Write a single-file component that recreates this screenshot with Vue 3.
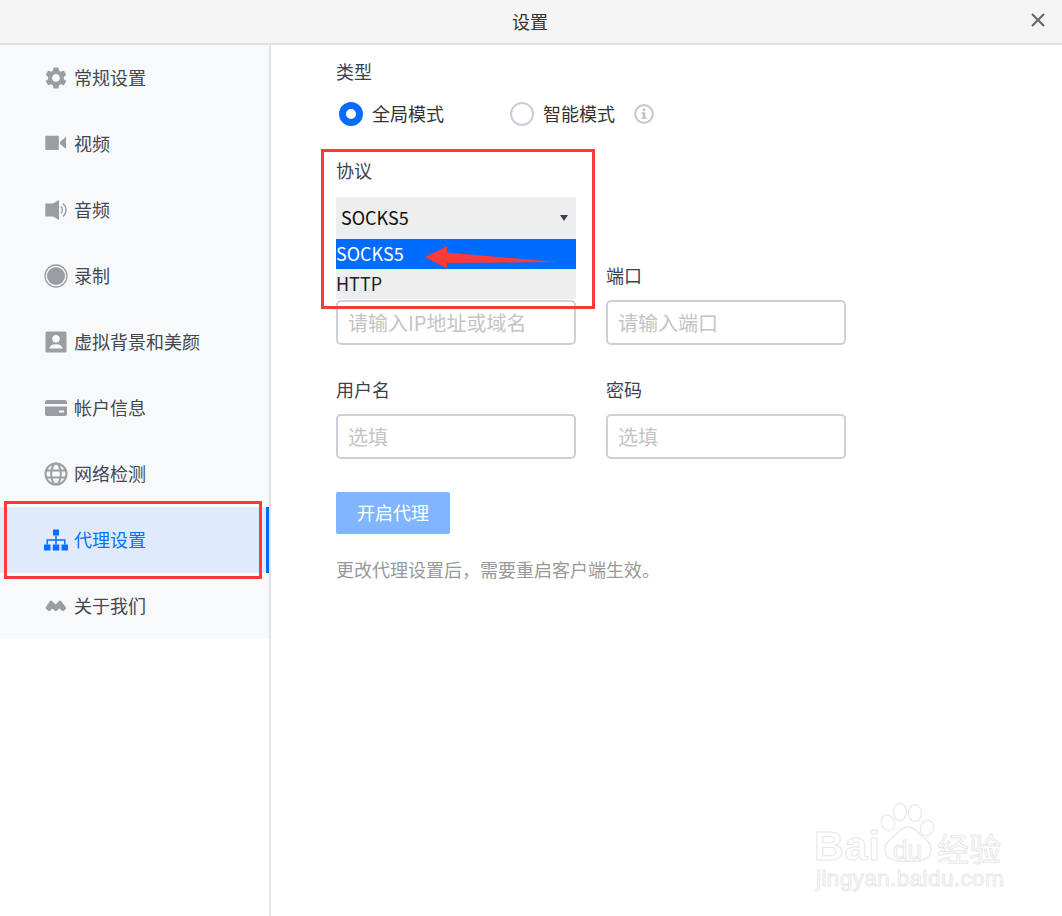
<script setup>
const menu = [
  { key: 'gear', label: '常规设置' },
  { key: 'video', label: '视频' },
  { key: 'audio', label: '音频' },
  { key: 'record', label: '录制' },
  { key: 'person', label: '虚拟背景和美颜' },
  { key: 'card', label: '帐户信息' },
  { key: 'globe', label: '网络检测' },
  { key: 'net', label: '代理设置', active: true },
  { key: 'about', label: '关于我们' }
]
</script>

<template>
  <div class="app">
    <header class="titlebar">
      <span class="title">设置</span>
      <svg class="close" width="16" height="16" viewBox="0 0 16 16">
        <path d="M2 2 14 14M14 2 2 14" stroke="#666a70" stroke-width="2.2" fill="none" />
      </svg>
    </header>

    <div class="body">
      <aside class="side">
        <ul class="menu">
          <li v-for="m in menu" :key="m.key" class="item" :class="{ active: m.active }">
            <svg class="icon" width="24" height="24" viewBox="0 0 24 24">
              <path v-if="m.key === 'gear'" transform="translate(-1.1 -1.1) scale(1.09)" d="M19.14 12.94c.04-.3.06-.61.06-.94 0-.32-.02-.64-.07-.94l2.03-1.58a.49.49 0 0 0 .12-.61l-1.92-3.32a.488.488 0 0 0-.59-.22l-2.39.96c-.5-.38-1.03-.7-1.62-.94l-.36-2.54a.484.484 0 0 0-.48-.41h-3.84c-.24 0-.43.17-.47.41l-.36 2.54c-.59.24-1.13.57-1.62.94l-2.39-.96c-.22-.08-.47 0-.59.22L2.74 8.87c-.12.21-.08.47.12.61l2.03 1.58c-.05.3-.09.63-.09.94s.02.64.07.94l-2.03 1.58a.49.49 0 0 0-.12.61l1.92 3.32c.12.22.37.29.59.22l2.39-.96c.5.38 1.03.7 1.62.94l.36 2.54c.05.24.24.41.48.41h3.84c.24 0 .44-.17.47-.41l.36-2.54c.59-.24 1.13-.56 1.62-.94l2.39.96c.22.08.47 0 .59-.22l1.92-3.32c.12-.22.07-.47-.12-.61l-2.01-1.58zM12 15.6c-1.98 0-3.6-1.62-3.6-3.6s1.62-3.6 3.6-3.6 3.6 1.62 3.6 3.6-1.62 3.6-3.6 3.6z" />
              <template v-else-if="m.key === 'video'">
                <rect x="1.300" y="3.700" width="13.500" height="14.300" rx="1" />
                <path d="M16 10 22 4.700V17l-6-5z" />
              </template>
              <template v-else-if="m.key === 'audio'">
                <path d="M1.300 5.500H9L15 2v20l-6-3.500H1.300z" />
                <path d="M16.800 8.500a4.500 4.500 0 0 1 0 7M19 5.500a8.500 8.500 0 0 1 0 13" fill="none" stroke="currentColor" stroke-width="1.400" />
              </template>
              <template v-else-if="m.key === 'record'">
                <circle cx="12" cy="12" r="11" fill="none" stroke="currentColor" stroke-width="1.300" />
                <circle cx="12" cy="12" r="9" />
              </template>
              <path v-else-if="m.key === 'person'" fill-rule="evenodd" d="M3 1.500h18q1.500 0 1.500 1.500v18q0 1.500-1.500 1.500H3q-1.500 0-1.500-1.500V3q0-1.500 1.500-1.500zM12 5a3.800 3.800 0 1 0 0 7.600A3.800 3.800 0 0 0 12 5zM5.500 18.500h13c0-2.800-3-4.300-6.500-4.300s-6.500 1.500-6.500 4.300z" />
              <path v-else-if="m.key === 'card'" fill-rule="evenodd" d="M3 4h18q2 0 2 2v2H1V6q0-2 2-2zM1 10.500h22V18q0 2-2 2H3q-2 0-2-2zM15 14.500v2h5v-2z" />
              <g v-else-if="m.key === 'globe'" fill="none" stroke="currentColor" stroke-width="2">
                <circle cx="12" cy="12" r="10.500" />
                <ellipse cx="12" cy="12" rx="4.800" ry="10.500" />
                <path d="M2.200 8.500h19.600M2.200 15.500h19.600" />
              </g>
              <template v-else-if="m.key === 'net'">
                <rect x="9" y="1.500" width="6" height="6" />
                <rect x="0" y="16.500" width="6.500" height="6" />
                <rect x="8.800" y="16.500" width="6.500" height="6" />
                <rect x="17.500" y="16.500" width="6.500" height="6" />
                <path d="M3.200 16.500V12h17.600v4.500M12 7.500v9" fill="none" stroke="currentColor" stroke-width="1.500" />
              </template>
              <path v-else d="M1.300 14 6 7Q7 5.800 8 7l3.700 3.500L15 7q1-1.200 2 0l5.500 7-2.500 2.800q-1.500.7-3-.8l-1.500-1.500-3 2.500q-.8.5-1.500 0l-2.500-2.500-2 2q-1.500 1-2.500.3z" />
            </svg>
            <span class="item-text">{{ m.label }}</span>
          </li>
        </ul>
      </aside>

      <main class="main">
        <div class="label first">类型</div>
        <div class="radios">
          <label class="radio"><i class="dot on"></i><span class="rtext">全局模式</span></label>
          <label class="radio second"><i class="dot"></i><span class="rtext">智能模式</span></label>
          <svg class="info" width="20" height="20" viewBox="0 0 20 20">
            <circle cx="10" cy="10" r="8.800" fill="none" stroke="#c8cacc" stroke-width="2.200" />
            <circle cx="10" cy="5.800" r="1.500" fill="#bfc1c4" />
            <path d="M7.500 8.300h3.800v5.300h1.300v1.500H7.500v-1.500h1.300v-3.800H7.500z" fill="#bfc1c4" />
          </svg>
        </div>

        <div class="label proto">协议</div>
        <div class="select">
          <div class="current">
            <span class="cur-text">SOCKS5</span>
            <i class="caret"></i>
          </div>
          <ul class="options">
            <li class="opt sel">SOCKS5</li>
            <li class="opt">HTTP</li>
          </ul>
        </div>

        <div class="grid addr">
          <div class="field">
            <div class="label"></div>
            <input class="input" placeholder="请输入IP地址或域名" />
          </div>
          <div class="field">
            <div class="label">端口</div>
            <input class="input" placeholder="请输入端口" />
          </div>
        </div>

        <div class="grid user">
          <div class="field">
            <div class="label">用户名</div>
            <input class="input" placeholder="选填" />
          </div>
          <div class="field">
            <div class="label">密码</div>
            <input class="input" placeholder="选填" />
          </div>
        </div>

        <button class="btn"><span class="btn-text">开启代理</span></button>
        <p class="note">更改代理设置后，需要重启客户端生效。</p>
      </main>
    </div>

    <!-- annotations painted over the screenshot -->
    <div class="mark mark-proto"></div>
    <div class="mark mark-menu"></div>
    <svg class="arrow" width="140" height="30" viewBox="0 0 140 30">
      <path d="M0 12 22 1v6.500L133 17 22 18v5.500z" fill="#fb3a3a" />
    </svg>

    <div class="wm">
      <svg class="paw" width="90" height="75" viewBox="0 0 90 75">
        <g fill="#fff" stroke="#e9e9e9" stroke-width="1.300">
          <ellipse cx="10" cy="25" rx="6.500" ry="8" transform="rotate(-20 10 25)" />
          <ellipse cx="22" cy="14" rx="6.500" ry="8.500" />
          <ellipse cx="37" cy="15" rx="6.500" ry="8.500" />
          <ellipse cx="49" cy="30" rx="6.500" ry="8" transform="rotate(25 49 30)" />
          <path d="M30 29c7 0 10 6 15 10 7 5 10 11 7 17-3 7-11 8-22 7-11 1-19 0-22-7-3-6 0-12 7-17 5-4 8-10 15-10z" />
        </g>
      </svg>
      <span class="bai">Bai</span>
      <span class="du">du</span>
      <span class="jy">经验</span>
      <span class="site">jingyan.baidu.com</span>
    </div>
  </div>
</template>

<style scoped>
.app {
  position: relative;
  width: 1062px;
  height: 916px;
  overflow: hidden;
  background: #fff;
  color: #3c4150;
  font-family: "Noto Sans CJK SC", "Noto Sans", sans-serif;
  font-size: 18px;
}
.titlebar {
  position: relative;
  height: 43px;
  background: #f5f5f5;
  border-bottom: 2px solid #e0e0e0;
  display: flex;
  align-items: center;
  justify-content: center;
  padding-right: 2px;
  color: #333;
}
.title { line-height: 43px; }
.close { position: absolute; right: 16px; top: 12px; }
.body { display: flex; height: 871px; }
.side {
  width: 269px;
  flex: none;
  border-right: 2px solid #e2e3e6;
}
.menu { list-style: none; margin: 0; padding: 0; background: #f8f9fb; }
.item {
  height: 66px;
  display: flex;
  align-items: center;
  gap: 6px;
  padding-left: 44px;
  color: #44474d;
}
.item-text { padding-bottom: 2px; }
.icon { fill: #9a9da2; color: #9a9da2; flex: none; }
.item.active {
  background: #dfeafc;
  color: #0a6fff;
  box-shadow: inset -3px 0 0 #006cff;
}
.item.active .icon { fill: #0a6fff; color: #0a6fff; }
.main { flex: 1; padding: 14px 0 0 65px; }
.label { height: 26px; line-height: 24px; color: #3c4150; }
.radios { display: flex; align-items: center; height: 26px; margin-top: 16px; padding-left: 3px; }
.radio { display: flex; align-items: center; gap: 9px; color: #333; }
.rtext { padding-bottom: 2px; }
.radio.second { margin-left: 66px; }
.dot {
  width: 24px;
  height: 24px;
  box-sizing: border-box;
  border-radius: 50%;
  border: 2px solid #c9cedb;
  background: #fff;
}
.dot.on { border: 7.500px solid #0a6cff; }
.info { margin-left: 19px; }
.proto { margin-top: 31px; }
.select { position: relative; width: 240px; margin-top: 13px; }
.current {
  height: 42px;
  background: #eee;
  display: flex;
  align-items: center;
  justify-content: space-between;
  padding: 0 8px 0 5px;
  color: #111;
}
.cur-text { padding-bottom: 2px; }
.caret {
  width: 0;
  height: 0;
  border: 4.500px solid transparent;
  border-top: 6px solid #3c4150;
  border-bottom: 0;
}
.options { position: absolute; left: 0; right: 0; top: 42px; z-index: 2; list-style: none; margin: 0; padding: 0; background: #eee; }
.opt { height: 30px; line-height: 28px; color: #222; }
.opt.sel { background: #006cff; color: #fff; }
.grid { display: grid; grid-template-columns: 240px 240px; column-gap: 30px; }
.addr { margin-top: 24px; }
.user { margin-top: 32px; }
.input {
  display: block;
  box-sizing: border-box;
  width: 240px;
  height: 45px;
  margin-top: 11px;
  padding: 0 10px;
  border: 2px solid #cdd0dc;
  border-radius: 5px;
  background: #fff;
  outline: none;
  font: inherit;
  font-size: 20px;
  color: #333;
}
.input::placeholder { color: #c4c4c4; opacity: 1; }
.btn {
  display: block;
  width: 114px;
  height: 42px;
  margin-top: 33px;
  border: 0;
  border-radius: 2px;
  background: #80b6ff;
  color: #fff;
  font: inherit;
  padding: 0 0 2px;
}
.note { margin: 23px 0 0; line-height: 24px; color: #999; }
.mark { position: absolute; box-sizing: border-box; border: 3px solid #fb3a3a; z-index: 3; }
.mark-proto { left: 321px; top: 149px; width: 274px; height: 160px; }
.mark-menu { left: 4px; top: 501px; width: 258px; height: 78px; }
.arrow { position: absolute; left: 425px; top: 245px; z-index: 3; }
.wm { position: absolute; left: 810px; top: 798px; width: 200px; height: 100px; color: #fff; }
.wm span { position: absolute; -webkit-text-stroke: 1px #e8e8e8; line-height: 1; }
.paw { position: absolute; left: 68px; top: 0; }
.bai { left: 4px; top: 28px; font: 700 41px "Liberation Sans", sans-serif; letter-spacing: 1px; }
.du { left: 83px; top: 39px; font: 400 26px "Liberation Sans", sans-serif; }
.jy { left: 127px; top: 33px; font-size: 32px; }
.site { left: 6px; top: 70px; font: 400 22.500px "Liberation Sans", sans-serif; letter-spacing: 0.4px; }
</style>

<style>
html, body { margin: 0; background: #fff; }
</style>
